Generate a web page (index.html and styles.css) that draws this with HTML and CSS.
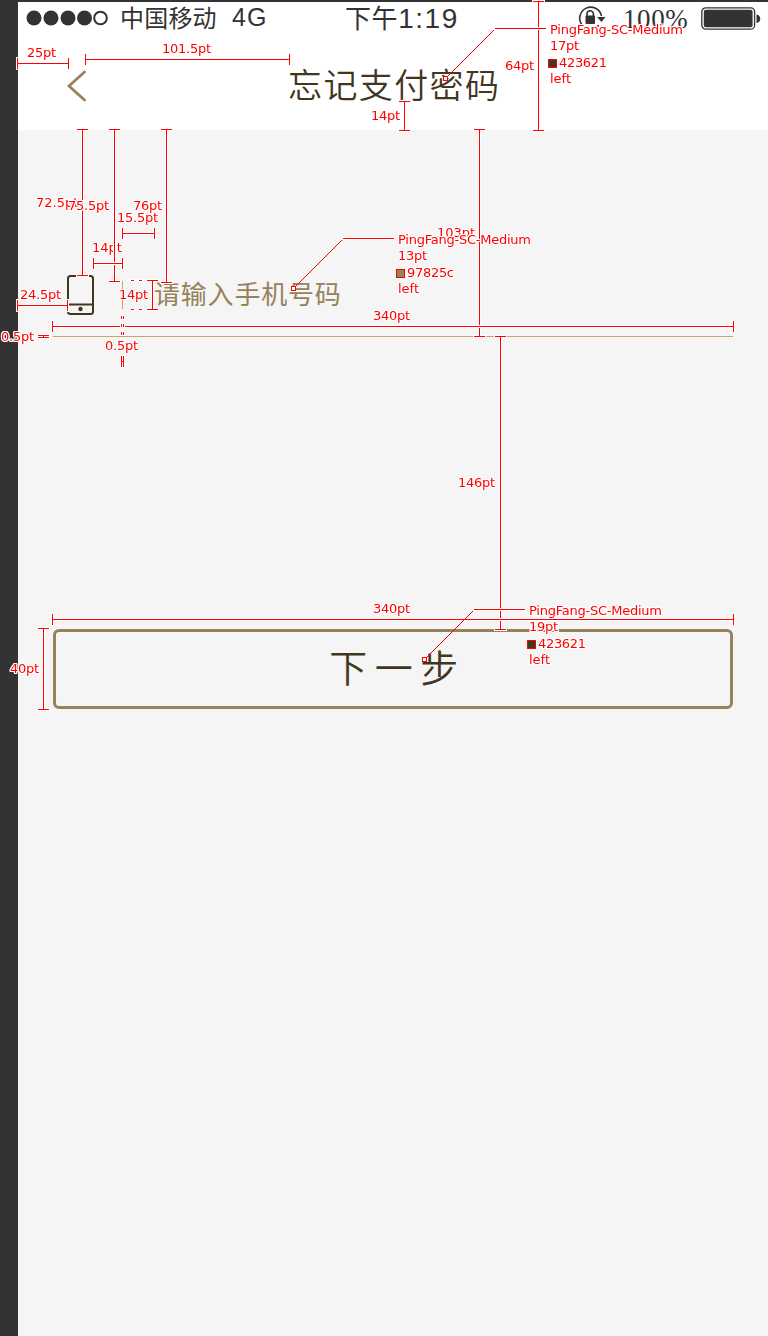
FILE: index.html
```html
<!DOCTYPE html>
<html lang="zh-CN">
<head>
<meta charset="utf-8">
<title>忘记支付密码</title>
<link rel="stylesheet" href="styles.css">
</head>
<body>
<div class="board">
  <main class="screen">
    <div class="status">
      <svg class="signal" width="84" height="16" viewBox="0 0 84 16"><circle cx="8" cy="8" r="7.5"/><circle cx="25" cy="8" r="7.5"/><circle cx="42" cy="8" r="7.5"/><circle cx="58.500" cy="8" r="7.500"/><circle class="hollow" cx="74.500" cy="8" r="6.300"/></svg>
      <span class="carrier">中国移动</span>
      <span class="network">4G</span>
      <span class="time">下午<span class="clock">1:19</span></span>
      <svg class="lock" width="28" height="28" viewBox="0 0 28 28"><path class="ring" d="M4.500 21.500A11 11 0 1 1 23.500 12M17 23.500l4-2"/><path d="M19 13h8.500l-4 5z"/><rect x="7.500" y="11.500" width="9.500" height="8.500" rx="1"/><path class="shackle" d="M9 12v-2a3.200 3.200 0 0 1 6.400 0v2"/></svg>
      <span class="percent">100%</span>
      <svg class="battery" width="60" height="24" viewBox="0 0 60 24"><rect class="shell" x=".8" y=".8" width="52.800" height="21.400" rx="4"/><rect x="2.800" y="2.800" width="48.800" height="17.400" rx="2"/><path d="M55.500 7.500c5 1 5 7.500 0 8.500z"/></svg>
    </div>
    <header class="nav">
      <svg class="back" width="22" height="32" viewBox="0 0 22 32"><path d="M18.500 2 3 16l15.500 14"/></svg>
      <h1 class="title">忘记支付密码</h1>
    </header>
    <section class="form">
      <div class="field">
        <svg class="phone" width="27" height="40" viewBox="0 0 27 40"><rect x="1" y="1" width="25" height="38" rx="2.500"/><path d="M1 29.500h25"/><circle cx="13.500" cy="34" r="2.200"/></svg>
        <span class="bar"></span>
        <span class="hint">请输入手机号码</span>
      </div>
      <button class="next" type="button">下一步</button>
    </section>
  </main>

  <svg class="notes" width="768" height="1336" viewBox="0 0 768 1336">
    <text x="36" y="207">72.5pt</text>
    <path class="line" d="M82.500 129V276M77 129.500h11M77 275.500h11"/>
    <text x="68" y="210" textLength="41">75.5pt</text>
    <text x="92" y="252">14pt</text>
    <path class="line" d="M114.500 129V282M109 129.500h11M109 281.500h11"/>
    <path class="line" d="M166.500 129V283M161 129.500h11M161 282.500h11"/>
    <text x="133" y="210" textLength="29">76pt</text>
    <text x="117" y="222" textLength="41">15.5pt</text>
    <path class="line" d="M122 233.500h33M122.500 228v11M154.500 228v11"/>
    <path class="line" d="M93 263.500h30M93.500 258v11M122.500 258v11"/>

    <text x="27" y="57" textLength="29">25pt</text>
    <path class="line" d="M17 63.500h52M17.500 58v11M68.500 58v11"/>
    <text x="162" y="53" textLength="49">101.5pt</text>
    <path class="line" d="M85 59.500h205M85.500 54v11M289.500 54v11"/>
    <text x="371" y="120" textLength="29">14pt</text>
    <path class="line" d="M404.500 101v30M399 101.500h11M399 130.500h11"/>
    <text x="505" y="70" textLength="29">64pt</text>
    <path class="line" d="M538.500 1v130M533 1.500h11M533 130.500h11"/>

    <text x="437" y="237">103pt</text>
    <path class="line" d="M479.500 129v208M474 129.500h11M474 336.500h11"/>
    <text x="373" y="320" textLength="37">340pt</text>
    <path class="line" d="M52 326.500h682M52.500 321v11M733.500 321v11"/>
    <text x="458" y="487" textLength="37">146pt</text>
    <path class="line" d="M500.500 336v294M495 336.500h11M495 629.500h11"/>
    <text x="373" y="613" textLength="37">340pt</text>
    <path class="line" d="M52 619.500h682M52.500 614v11M733.500 614v11"/>
    <text x="10" y="673" textLength="29">40pt</text>
    <path class="line" d="M43.500 628v82M38 628.500h11M38 709.500h11"/>

    <text x="20" y="299" textLength="41">24.5pt</text>
    <path class="line" d="M17 305.500h51M17.500 300v11M67.500 300v11"/>
    <text x="119" y="299" textLength="29">14pt</text>
    <path class="line" d="M152.500 280v30M147 280.500h11M147 309.500h11M131 280.500h3M139 280.500h3M131 309.500h3M139 309.500h3"/>
    <text x="1" y="341" textLength="33">0.5pt</text>
    <path class="line" d="M38 335.500h11M38 337.500h11M43 336.500h1"/>
    <path class="line" d="M121.500 316v3M123.500 316v3M121.500 324v3M123.500 324v3M121.500 332v3M123.500 332v3M121.500 356v11M123.500 356v11M122 361.500h1"/>
    <text x="105" y="350" textLength="33">0.5pt</text>

    <path class="leader" d="M447.500 76.500 495.500 28.500"/>
    <path class="line" d="M495 28.500h51"/>
    <rect class="pin" x="443.500" y="76.500" width="4" height="4"/>
    <text x="550" y="34" textLength="133">PingFang-SC-Medium</text>
    <text x="550" y="50" textLength="29">17pt</text>
    <rect class="swatch dark" x="548.500" y="59.500" width="8" height="8"/>
    <text x="559" y="67" textLength="48">423621</text>
    <text x="550" y="83">left</text>

    <path class="leader" d="M295.500 286.500 343.500 238.500"/>
    <path class="line" d="M343 238.500h51"/>
    <rect class="pin" x="291.500" y="286.500" width="4" height="4"/>
    <text x="398" y="244" textLength="133">PingFang-SC-Medium</text>
    <text x="398" y="260" textLength="29">13pt</text>
    <rect class="swatch gold" x="396.500" y="269.500" width="8" height="8"/>
    <text x="407" y="277" textLength="47">97825c</text>
    <text x="398" y="293">left</text>

    <path class="leader" d="M426.500 657.500 474.500 609.500"/>
    <path class="line" d="M474 609.500h51"/>
    <rect class="pin" x="422.500" y="657.500" width="4" height="4"/>
    <text x="529" y="615" textLength="133">PingFang-SC-Medium</text>
    <text x="529" y="631" textLength="29">19pt</text>
    <rect class="swatch dark" x="527.500" y="640.500" width="8" height="8"/>
    <text x="538" y="648" textLength="48">423621</text>
    <text x="529" y="664">left</text>
  </svg>
</div>
</body>
</html>
```
FILE: styles.css
```css
* { box-sizing: border-box; }
body { margin: 0; font-family: "Noto Sans CJK SC", sans-serif; }
.board {
  position: relative;
  width: 768px;
  height: 1336px;
  padding: 2px 0 0 18px;
  background: #333;
  overflow: hidden;
}
.screen { height: 1334px; background: #f5f5f5; }
.status, .nav { display: flex; background: #fff; white-space: nowrap; }
.status { height: 34px; padding-left: 8px; color: #333; line-height: 32px; }
.status svg { flex: none; fill: #333; }
.signal { margin-top: 8px; }
.signal .hollow { fill: none; stroke: #333; stroke-width: 2; }
.carrier { width: 122px; padding-left: 10px; font-size: 24px; line-height: 30px; letter-spacing: 0.2px; }
.network { width: 113px; font-family: "Liberation Sans", sans-serif; font-size: 25px; line-height: 31px; letter-spacing: 1px; }
.time { width: 233px; font-size: 26px; line-height: 30px; letter-spacing: 0.6px; }
.clock { font-family: "Liberation Sans", sans-serif; font-size: 28px; letter-spacing: 1.5px; }
.lock { margin-top: 2px; }
.lock .ring, .lock .shackle { fill: none; stroke: #333; stroke-width: 1.6; }
.percent { width: 95px; padding-left: 17px; font-family: "Liberation Serif", serif; font-size: 27px; line-height: 35px; letter-spacing: 0.6px; }
.battery { margin-top: 5px; }
.battery .shell { fill: none; stroke: #333; stroke-width: 1.3; }
.nav { height: 94px; padding-left: 48px; }
.back { margin-top: 34px; fill: none; stroke: #97825c; stroke-width: 2.8; stroke-linecap: round; }
.title { margin: 23px 0 0 200px; color: #423621; font-size: 34px; line-height: 50px; font-weight: 350; letter-spacing: 1.4px; }
.form { width: 715px; padding-left: 35px; }
.field { display: flex; height: 207px; padding: 145px 0 0 14px; border-bottom: 1px solid #c0a677; }
.phone { fill: none; stroke: #423621; stroke-width: 2; }
.phone circle { fill: #423621; stroke: none; }
.bar { width: 1px; height: 28px; margin: 6px 0 0 28px; background: #c0a677; }
.hint { margin: 0 0 0 31px; color: #97825c; font-size: 26px; line-height: 36px; letter-spacing: 0.8px; white-space: nowrap; }
.next {
  display: block;
  width: 680px;
  height: 80px;
  margin-top: 292px;
  padding: 0 0 7px 9px;
  border: 3px solid #97825c;
  border-radius: 6px;
  background: none;
  color: #423621;
  font: 350 38px/67px "Noto Sans CJK SC", sans-serif;
  letter-spacing: 7.5px;
}
.notes { position: absolute; left: 0; top: 0; font: 13px "DejaVu Sans", sans-serif; }
.notes text { fill: #f00; }
.notes .line { fill: none; stroke: #f00; shape-rendering: crispEdges; }
.notes text, .notes .line {
  filter: drop-shadow(1px 0 #fff) drop-shadow(-1px 0 #fff) drop-shadow(0 1px #fff) drop-shadow(0 -1px #fff);
}
.notes .leader { fill: none; stroke: #f00; stroke-width: 1; }
.pin { fill: #fff; stroke: #f00; }
.swatch { stroke: #f00; }
.dark { fill: #423621; }
.gold { fill: #97825c; }
```
